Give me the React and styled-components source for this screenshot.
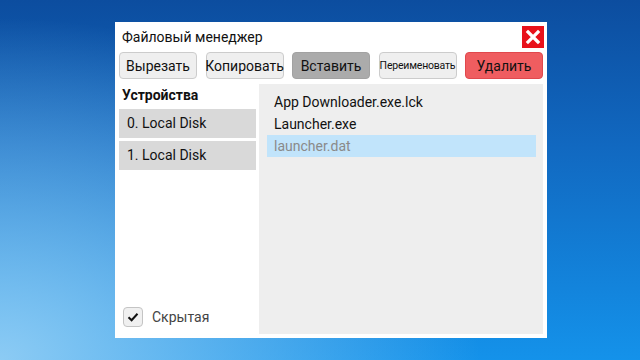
import React, { useState } from "react";
import styled, { createGlobalStyle } from "styled-components";

const GlobalStyle = createGlobalStyle`
  html, body {
    margin: 0;
    padding: 0;
  }
  body {
    font-family: Roboto, "Noto Sans", "Liberation Sans", sans-serif;
  }
`;

const files = [
  { name: "App Downloader.exe.lck" },
  { name: "Launcher.exe" },
  { name: "launcher.dat", hidden: true },
];

const disks = ["0. Local Disk", "1. Local Disk"];

const App = () => {
  const [selected, setSelected] = useState(2);
  const [showHidden, setShowHidden] = useState(true);

  return (
    <React.Fragment>
      <GlobalStyle />
      <Desktop>
        <Window>
          <TitleBar>
            <Title>Файловый менеджер</Title>
            <CloseButton>
              <svg width="16" height="16" viewBox="0 0 16 16">
                <path
                  d="M3 3 L13 13 M13 3 L3 13"
                  stroke="#fff"
                  strokeWidth="3.2"
                  strokeLinecap="square"
                />
              </svg>
            </CloseButton>
          </TitleBar>

          <Toolbar>
            <ToolButton>Вырезать</ToolButton>
            <ToolButton>Копировать</ToolButton>
            <ToolButton $variant="active">Вставить</ToolButton>
            <ToolButton $small>Переименовать</ToolButton>
            <ToolButton $variant="danger">Удалить</ToolButton>
          </Toolbar>

          <Body>
            <Sidebar>
              <SideTitle>Устройства</SideTitle>
              {disks.map((d) => (
                <Disk key={d}>{d}</Disk>
              ))}
              <HiddenToggle onClick={() => setShowHidden(!showHidden)}>
                <Box>
                  {showHidden && (
                    <svg width="14" height="14" viewBox="0 0 14 14">
                      <path
                        d="M2.5 7.2 L5.6 10.2 L11.5 3.8"
                        fill="none"
                        stroke="#111"
                        strokeWidth="2"
                      />
                    </svg>
                  )}
                </Box>
                <span>Скрытая</span>
              </HiddenToggle>
            </Sidebar>

            <FileList>
              {files.map((f, i) => (
                <FileRow
                  key={f.name}
                  $selected={i === selected}
                  $hidden={f.hidden}
                  onClick={() => setSelected(i)}
                >
                  {f.name}
                </FileRow>
              ))}
            </FileList>
          </Body>
        </Window>
      </Desktop>
    </React.Fragment>
  );
};

export default App;

const Desktop = styled.div`
  width: 640px;
  height: 360px;
  box-sizing: border-box;
  padding: 22px 0 0 115px;
  background:
    radial-gradient(ellipse 75% 95% at 0% 100%, #8ccbf4 0%, rgba(140, 203, 244, 0) 100%),
    linear-gradient(180deg, #0c4d9f 0%, #1168c0 40%, #1492ea 100%);
  overflow: hidden;
`;

const Window = styled.div`
  width: 432px;
  height: 316px;
  background: #fff;
  box-sizing: border-box;
  padding: 0 4px 4px 4px;
  display: flex;
  flex-direction: column;
`;

const TitleBar = styled.div`
  display: flex;
  align-items: center;
  justify-content: space-between;
  height: 29px;
  padding: 0 0 0 3px;
`;

const Title = styled.div`
  font-size: 14px;
  color: #111;
`;

const CloseButton = styled.div`
  width: 22px;
  height: 22px;
  margin-right: -1px;
  background: #e8111b;
  display: flex;
  align-items: center;
  justify-content: center;
`;

const Toolbar = styled.div`
  display: flex;
  justify-content: space-between;
  margin-top: 1px;
`;

const ToolButton = styled.div`
  width: 78px;
  height: 27px;
  box-sizing: border-box;
  border-radius: 4px;
  border: 1px solid
    ${(p) =>
      p.$variant === "danger" ? "#e0484d" : p.$variant === "active" ? "#a2a2a2" : "#cccccc"};
  background: ${(p) =>
    p.$variant === "danger" ? "#ef5d60" : p.$variant === "active" ? "#ababab" : "#efefef"};
  color: #111;
  font-size: ${(p) => (p.$small ? "10.5px" : "14px")};
  display: flex;
  align-items: center;
  justify-content: center;
  white-space: nowrap;
  letter-spacing: ${(p) => (p.$small ? "-0.2px" : "0")};
`;

const Body = styled.div`
  flex: 1;
  display: flex;
  gap: 3px;
  margin-top: 5px;
  min-height: 0;
`;

const Sidebar = styled.div`
  width: 137px;
  display: flex;
  flex-direction: column;
  gap: 3px;
  padding-bottom: 7px;
`;

const SideTitle = styled.div`
  font-size: 14px;
  font-weight: bold;
  color: #111;
  height: 22px;
  line-height: 22px;
  padding-left: 3px;
`;

const Disk = styled.div`
  height: 29px;
  line-height: 29px;
  padding-left: 8px;
  background: #d9d9d9;
  font-size: 14px;
  color: #111;
`;

const HiddenToggle = styled.div`
  margin-top: auto;
  display: flex;
  align-items: center;
  gap: 9px;
  padding-left: 4px;
  font-size: 14px;
  color: #444;
`;

const Box = styled.div`
  width: 20px;
  height: 20px;
  box-sizing: border-box;
  border: 1px solid #c4c4c4;
  border-radius: 4px;
  background: #f0f0f0;
  display: flex;
  align-items: center;
  justify-content: center;
`;

const FileList = styled.div`
  flex: 1;
  background: #eeeeee;
  padding: 7px 7px 0 8px;
`;

const FileRow = styled.div`
  height: 22px;
  line-height: 22px;
  padding-left: 7px;
  font-size: 14px;
  color: ${(p) => (p.$hidden ? "#8a8a8a" : "#111")};
  background: ${(p) => (p.$selected ? "#c1e4fb" : "transparent")};
`;
